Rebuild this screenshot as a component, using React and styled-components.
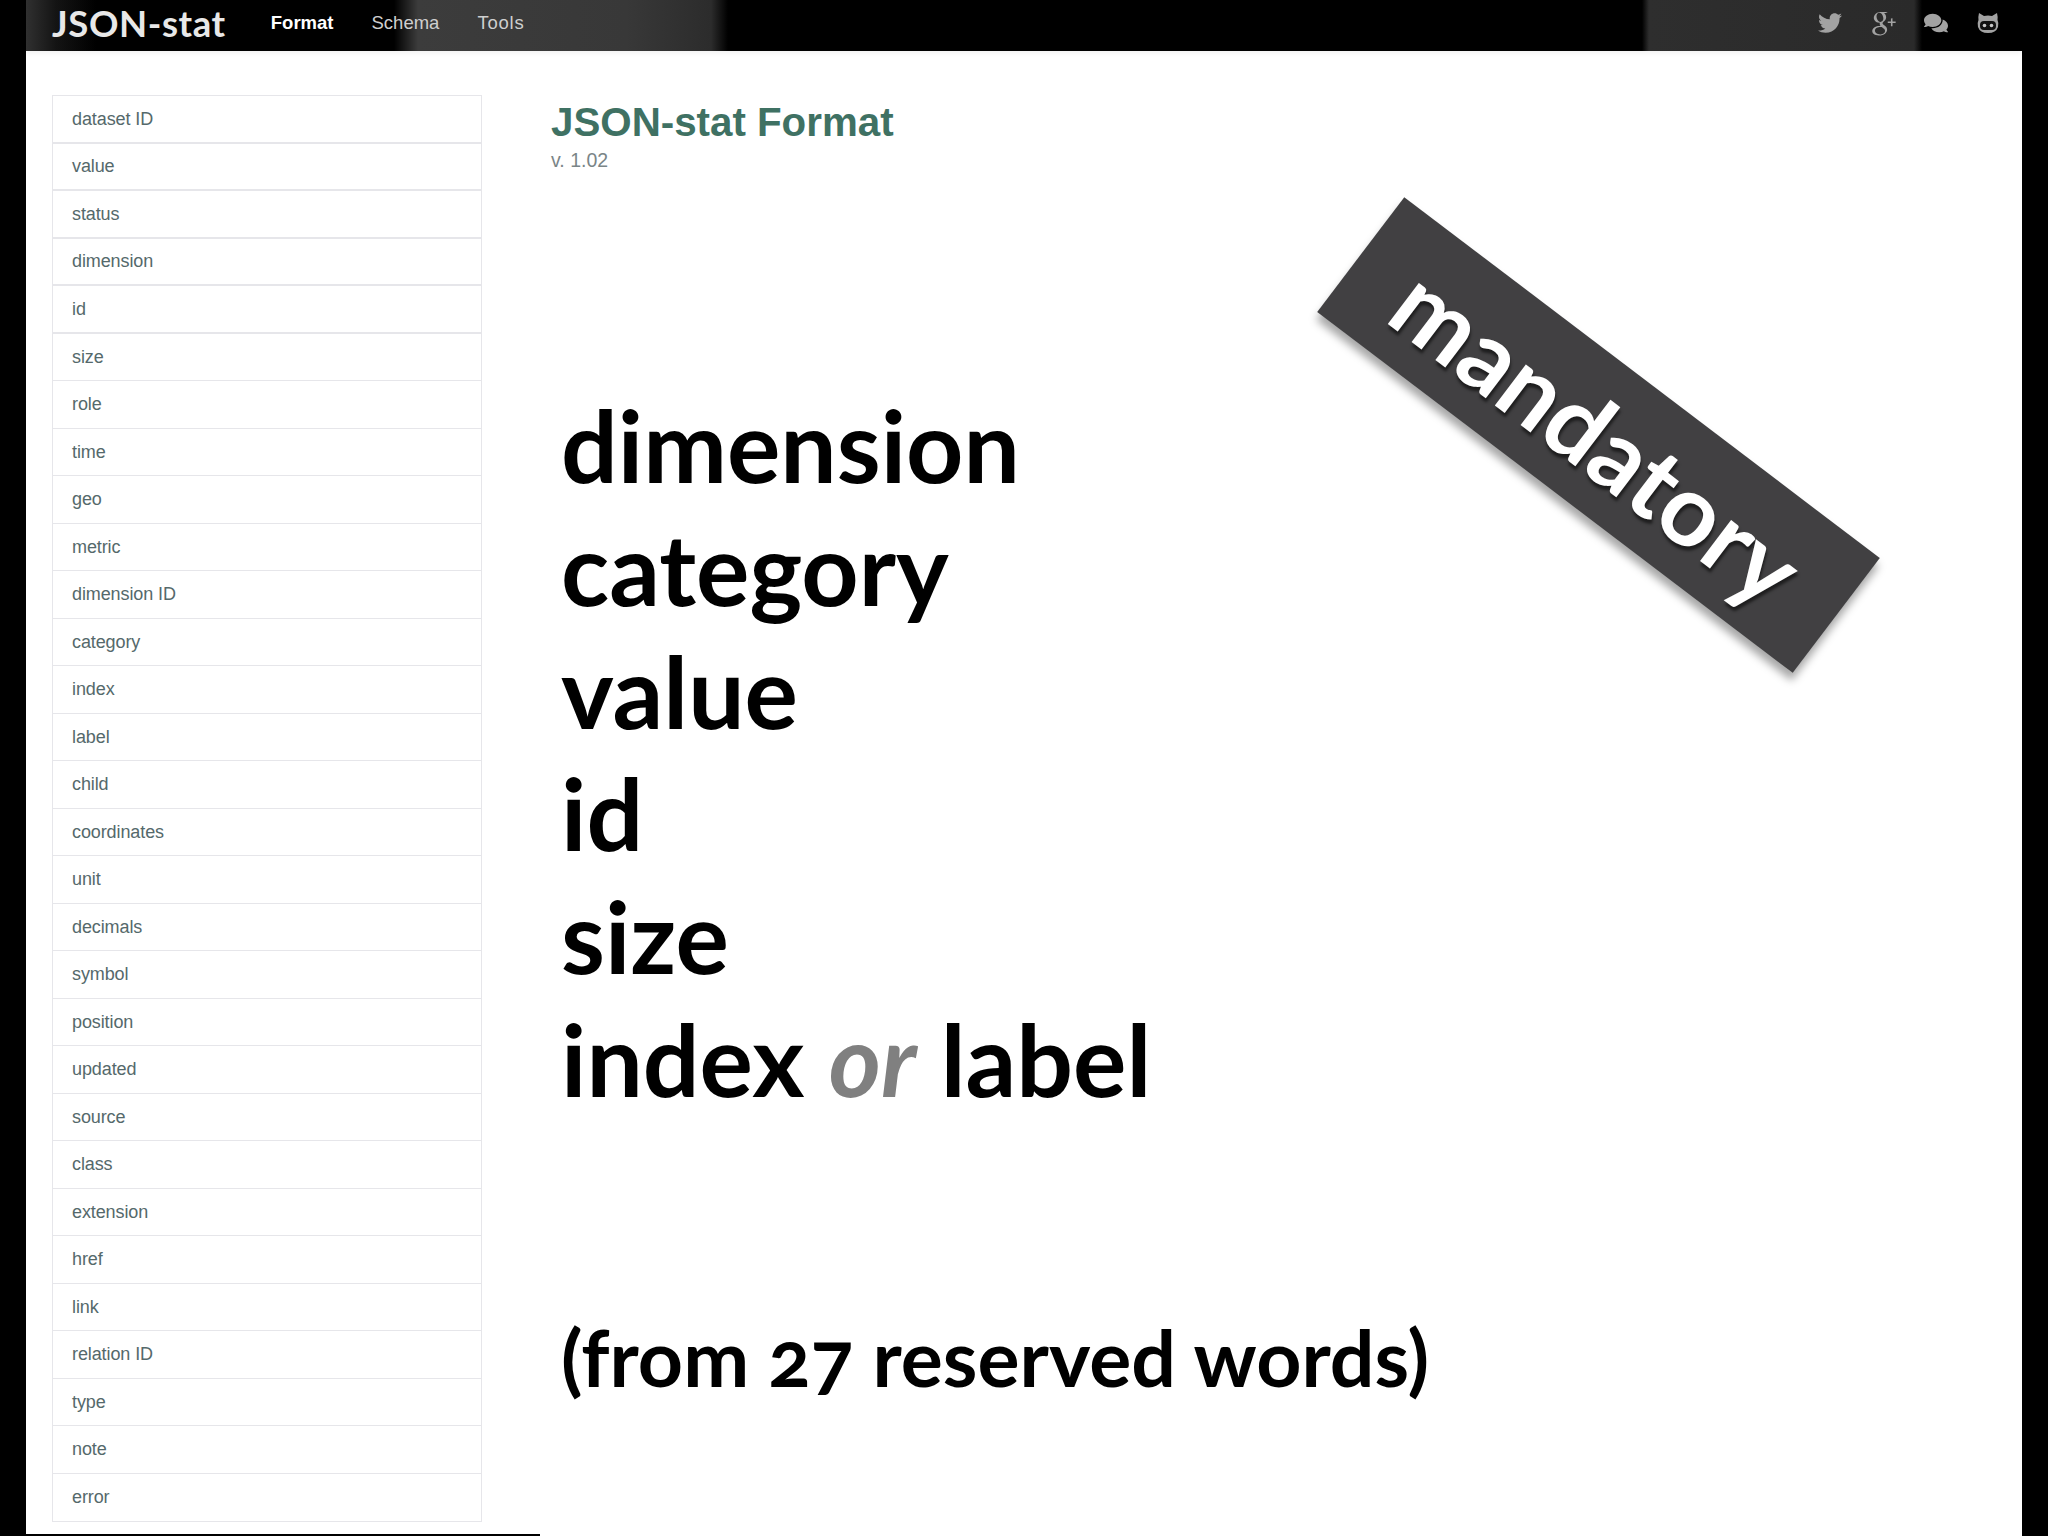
import React from 'react';
import styled, { createGlobalStyle } from 'styled-components';
import { FaTwitter, FaComments } from 'react-icons/fa';
import { TiSocialGooglePlus } from 'react-icons/ti';

const GlobalStyle = createGlobalStyle`
  html, body {
    margin: 0;
    padding: 0;
    background: #000;
  }
`;

const Page = styled.div`
  width: 2048px;
  height: 1536px;
  background: #000;
  overflow: hidden;
  position: relative;
`;

const Frame = styled.div`
  margin: 0 26px;
  height: 1536px;
  background: #fff;
  display: flex;
  flex-direction: column;
`;

const NavBar = styled.header`
  height: 51px;
  flex: none;
  display: flex;
  align-items: center;
  padding: 0 23px 5px 26px;
  box-sizing: border-box;
  box-shadow: 0 2px 5px rgba(0, 0, 0, 0.06);
  background: linear-gradient(
    90deg,
    #303030 0,
    #141414 30px,
    #000 70px,
    #000 368px,
    #3c3c3c 392px,
    #383838 600px,
    #2c2c2c 685px,
    #000 702px,
    #000 1616px,
    #2e2e2e 1623px,
    #2a2a2a 1888px,
    #000 1896px
  );
`;

const Brand = styled.span`
  font-family: 'Lato', sans-serif;
  font-weight: 700;
  font-size: 36.5px;
  letter-spacing: 0.6px;
  color: #e8e8e8;
  margin-right: 45px;
`;

const NavLink = styled.span`
  font-family: 'Liberation Sans', Arial, sans-serif;
  font-size: 18.5px;
  letter-spacing: ${p => p.$spacing || '0'};
  font-weight: ${p => (p.$active ? 700 : 400)};
  color: ${p => (p.$active ? '#fff' : '#cfcfcf')};
  margin-right: 38px;
`;

const IconGroup = styled.div`
  margin-left: auto;
  display: flex;
  align-items: center;
  gap: 29px;
  color: #a2a2a2;
  font-size: 24px;
`;

const PlusIcon = styled(TiSocialGooglePlus)`
  font-size: 38px;
  margin: -7px;
`;

const Body = styled.div`
  flex: 1;
  display: flex;
  padding: 44px 26px 0;
  gap: 69px;
`;

const SideList = styled.ul`
  list-style: none;
  margin: 0;
  padding: 0;
  width: 430px;
  flex: none;
  height: 1427px;
  display: grid;
  grid-auto-rows: 1fr;
  border: 1px solid #e6e6ea;
  box-sizing: border-box;
`;

const SideItem = styled.li`
  display: flex;
  align-items: center;
  padding: 1px 0 0 19px;
  font-family: 'Liberation Sans', Arial, sans-serif;
  font-size: 18px;
  letter-spacing: -0.1px;
  color: #55696b;
  border-bottom: ${p => (p.$last ? 'none' : `${p.$thick ? 2 : 1}px solid #e6e6ea`)};
`;

const Main = styled.main`
  flex: 1;
  display: flex;
  flex-direction: column;
`;

const Title = styled.h1`
  margin: 6px 0 0;
  font-family: 'Liberation Sans', Arial, sans-serif;
  font-size: 40.3px;
  line-height: 44px;
  font-weight: 700;
  color: #3f7163;
`;

const Version = styled.div`
  margin-top: 3px;
  font-family: 'Liberation Sans', Arial, sans-serif;
  font-size: 19.5px;
  line-height: 24px;
  color: #7a8587;
`;

const Words = styled.div`
  margin: 211px 0 0 10px;
  font-family: 'Lato', sans-serif;
  font-weight: 700;
  font-size: 100px;
  line-height: 122.8px;
  color: #000;
`;

const Word = styled.div``;

const Muted = styled.em`
  color: #808080;
`;

const Note = styled.div`
  margin: 192px 0 0 10px;
  font-family: 'Lato', sans-serif;
  font-weight: 700;
  font-size: 78.8px;
  line-height: 90px;
  font-variant-numeric: oldstyle-nums;
  color: #000;
`;

const Ribbon = styled.div`
  position: absolute;
  left: 1300px;
  top: 363px;
  width: 597px;
  height: 144px;
  display: flex;
  align-items: center;
  justify-content: center;
  background: #414042;
  color: #fff;
  font-family: 'Lato', sans-serif;
  font-weight: 700;
  font-size: 100px;
  transform: rotate(37.2deg);
  box-shadow: 4px 7px 9px rgba(0, 0, 0, 0.35);
  text-shadow: 3px 3px 3px rgba(0, 0, 0, 0.55);
`;

const BottomLine = styled.div`
  position: absolute;
  left: 0;
  bottom: 0;
  width: 540px;
  height: 2px;
  background: #000;
`;

const items = [
  'dataset ID', 'value', 'status', 'dimension', 'id', 'size', 'role', 'time', 'geo', 'metric',
  'dimension ID', 'category', 'index', 'label', 'child', 'coordinates', 'unit', 'decimals',
  'symbol', 'position', 'updated', 'source', 'class', 'extension', 'href', 'link',
  'relation ID', 'type', 'note', 'error',
];

// cat head with a dark mask, the reference's github glyph
const GithubIcon = () => (
  <svg width="22" height="20" viewBox="0 0 22 20">
    <path
      fill="currentColor"
      d="M2 0 L7 3 Q11 2 15 3 L20 0 Q21 4 20.5 7 Q22 10 21 14 Q19 20 11 20 Q3 20 1 14 Q0 10 1.5 7 Q1 4 2 0 Z"
    />
    <rect x="3" y="8" width="16" height="9" rx="4" fill="#111" />
    <circle cx="7.5" cy="12.5" r="1.8" fill="#c8c8c8" />
    <circle cx="14.5" cy="12.5" r="1.8" fill="#c8c8c8" />
  </svg>
);

const App = () => {
  return (
    <Page>
      <GlobalStyle />
      <Frame>
        <NavBar>
          <Brand>JSON-stat</Brand>
          <NavLink $active>Format</NavLink>
          <NavLink>Schema</NavLink>
          <NavLink $spacing="0.8px">Tools</NavLink>
          <IconGroup>
            <FaTwitter />
            <PlusIcon />
            <FaComments />
            <GithubIcon />
          </IconGroup>
        </NavBar>
        <Body>
          <SideList>
            {items.map((item, i) => (
              <SideItem key={item} $thick={i < 5} $last={i === items.length - 1}>{item}</SideItem>
            ))}
          </SideList>
          <Main>
            <Title>JSON-stat Format</Title>
            <Version>v. 1.02</Version>
            <Words>
              <Word>dimension</Word>
              <Word>category</Word>
              <Word>value</Word>
              <Word>id</Word>
              <Word>size</Word>
              <Word>index <Muted>or</Muted> label</Word>
            </Words>
            <Note>(from 27 reserved words)</Note>
          </Main>
        </Body>
      </Frame>
      <Ribbon>mandatory</Ribbon>
      <BottomLine />
    </Page>
  );
};

export default App;
